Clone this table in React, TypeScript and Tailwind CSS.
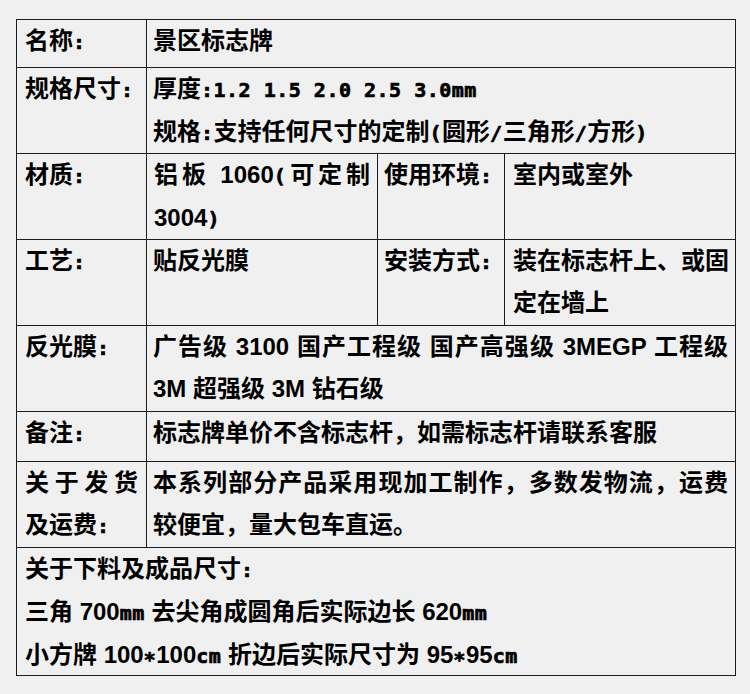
const cell = "bg-[#f0f0f0] leading-[42px] text-[24px] font-bold text-black"
const fill = "text-justify [text-align-last:justify]"

// half-width run (units, colons, brackets) — 12px per char like the source font
function M({ children }: { children: React.ReactNode }) {
  return (
    <span className="font-['DejaVu_Sans_Mono',monospace] text-[20px] tracking-[0.5px] [-webkit-text-stroke:0.7px_black]">
      {children}
    </span>
  )
}

export default function App() {
  return (
    <div className="min-h-[694px] w-[750px] bg-[#f0f0f0] pt-[19px] pl-[16px] font-['Liberation_Sans','Noto_Sans_CJK_SC',sans-serif]">
      <div className="grid w-[720px] grid-cols-[129px_230px_126px_230px] grid-rows-[47px_85px_85px_85px_85px_49px_85px_127px] gap-px bg-[#1c1c1c] p-px">
        <div className={`${cell} px-2`}>名称<M>:</M></div>
        <div className={`${cell} col-span-3 px-[6px]`}>景区标志牌</div>

        <div className={`${cell} px-2`}>规格尺寸<M>:</M></div>
        <div className={`${cell} col-span-3 px-[6px]`}>
          <div>
            厚度<M>:1.2 1.5 2.0 2.5 3.0mm</M>
          </div>
          <div>
            规格<M>:</M>支持任何尺寸的定制<M>(</M>圆形<M>/</M>三角形<M>/</M>方形<M>)</M>
          </div>
        </div>

        <div className={`${cell} px-2`}>材质<M>:</M></div>
        <div className={`${cell} px-[7px]`}>
          <div className={fill}>
            铝板 1060<M>(</M>可定制
          </div>
          <div>
            3004<M>)</M>
          </div>
        </div>
        <div className={`${cell} px-[6px]`}>使用环境<M>:</M></div>
        <div className={`${cell} px-2`}>室内或室外</div>

        <div className={`${cell} px-2`}>工艺<M>:</M></div>
        <div className={`${cell} px-[6px]`}>贴反光膜</div>
        <div className={`${cell} px-[6px]`}>安装方式<M>:</M></div>
        <div className={`${cell} whitespace-nowrap pl-2`}>
          <div>装在标志杆上、或固</div>
          <div>定在墙上</div>
        </div>

        <div className={`${cell} px-2`}>反光膜<M>:</M></div>
        <div className={`${cell} col-span-3 pl-[6px] pr-[7px]`}>
          <div className={fill}>广告级 3100 国产工程级 国产高强级 3MEGP 工程级</div>
          <div>3M 超强级 3M 钻石级</div>
        </div>

        <div className={`${cell} px-2`}>备注<M>:</M></div>
        <div className={`${cell} col-span-3 px-[6px]`}>标志牌单价不含标志杆，如需标志杆请联系客服</div>

        <div className={`${cell} px-2`}>
          <div className={fill}>关于发货</div>
          <div>及运费<M>:</M></div>
        </div>
        <div className={`${cell} col-span-3 pl-[6px] pr-[7px]`}>
          <div className={fill}>本系列部分产品采用现加工制作，多数发物流，运费</div>
          <div>较便宜，量大包车直运。</div>
        </div>

        <div className={`${cell} col-span-4 px-2`}>
          <div>关于下料及成品尺寸<M>:</M></div>
          <div>
            三角 700<M>mm</M> 去尖角成圆角后实际边长 620<M>mm</M>
          </div>
          <div>
            小方牌 100<M>∗</M>100<M>cm</M> 折边后实际尺寸为 95<M>∗</M>95<M>cm</M>
          </div>
        </div>
      </div>
    </div>
  )
}
